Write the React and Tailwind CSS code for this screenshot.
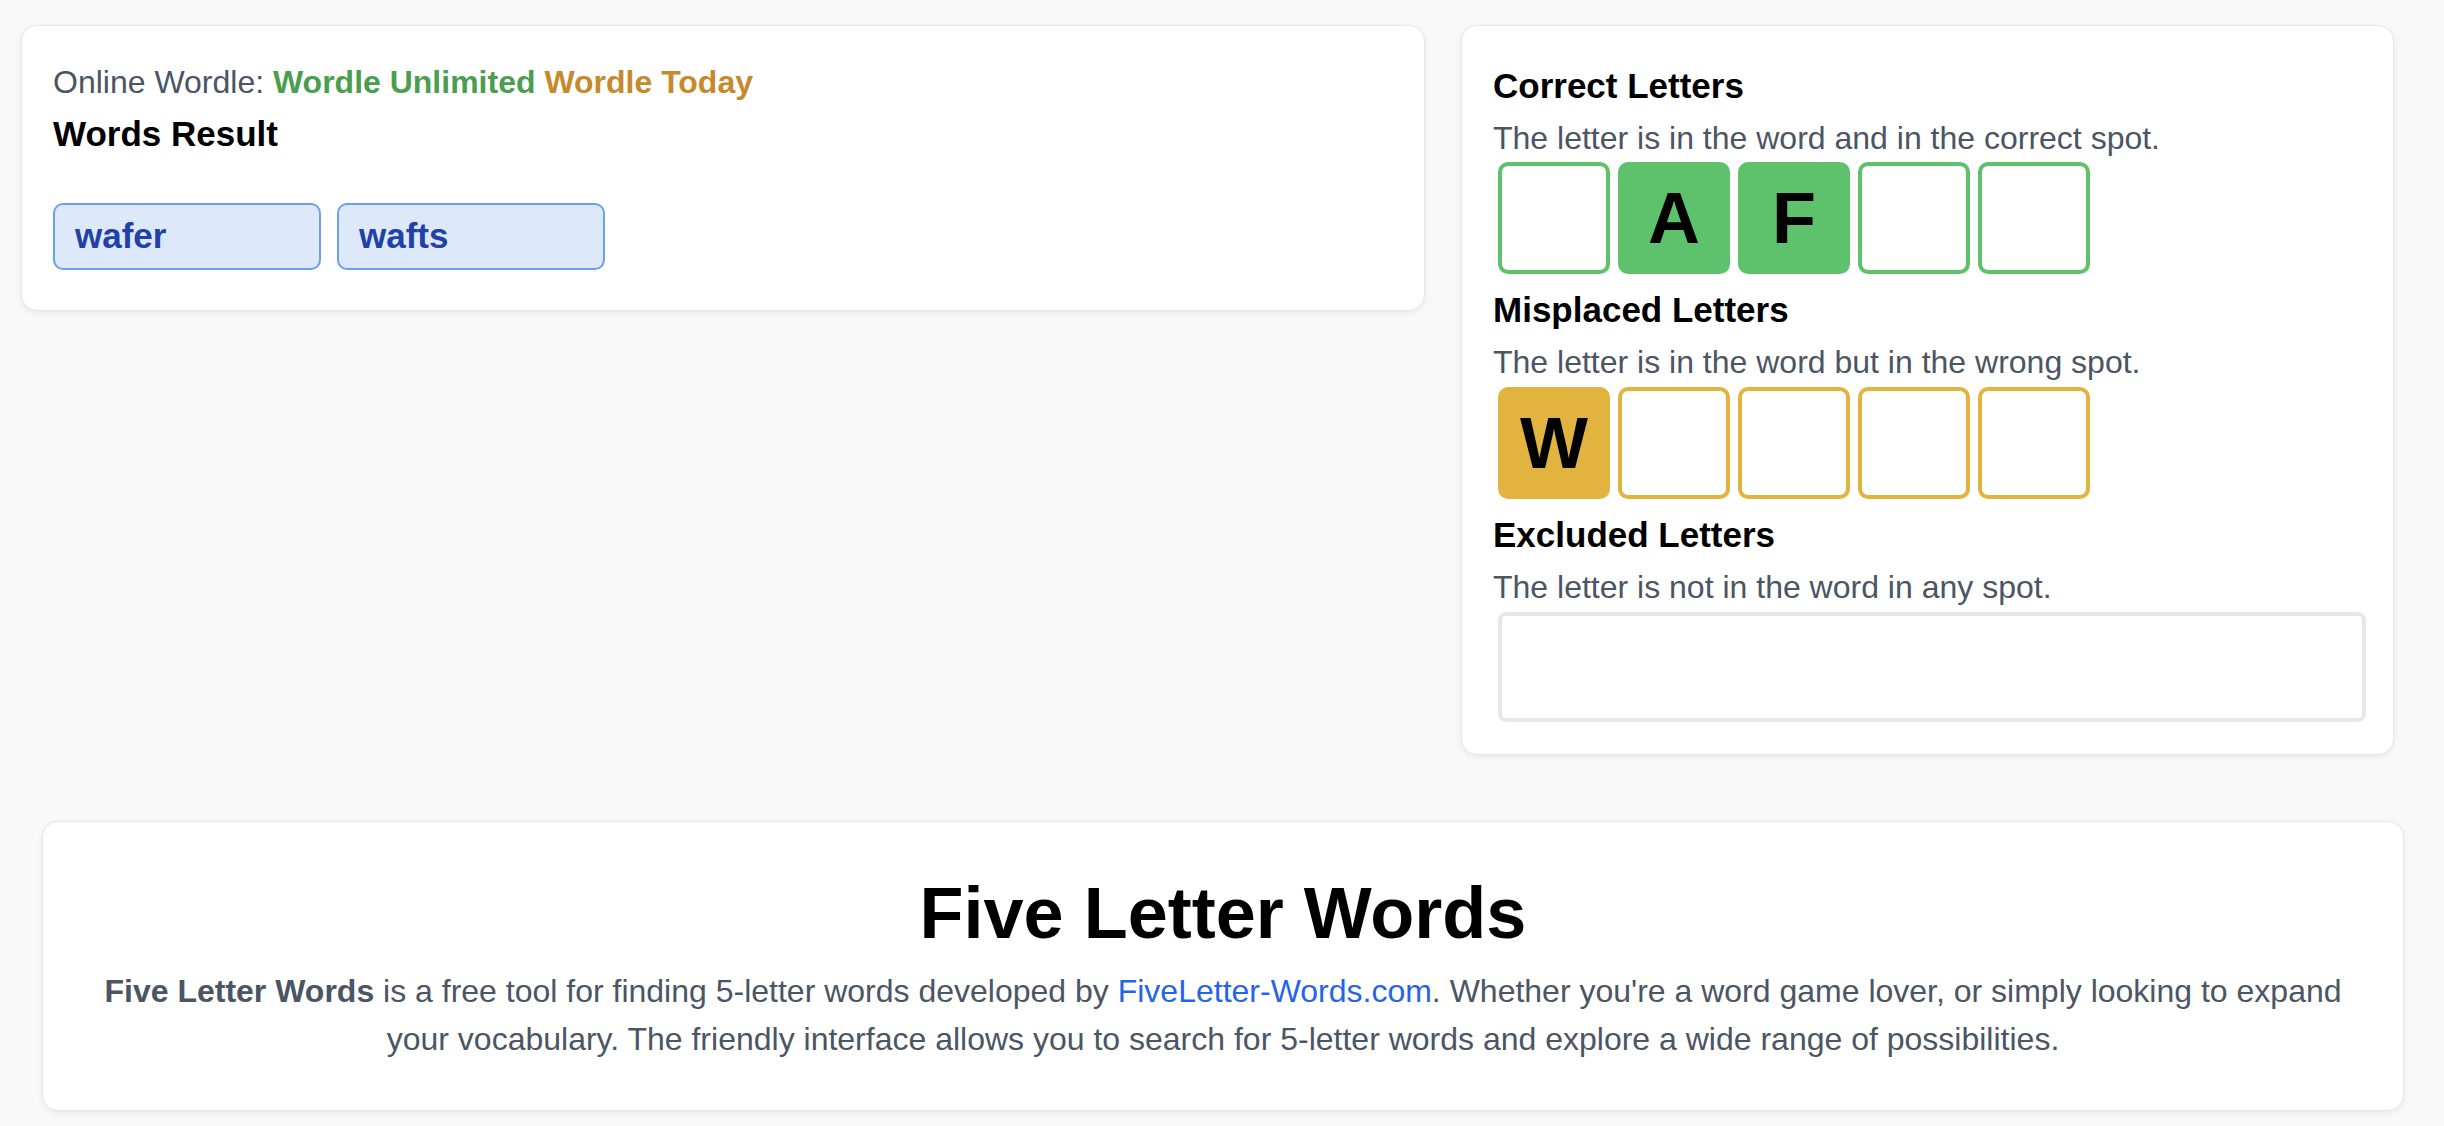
import React from 'react';

const correct = ['', 'A', 'F', '', ''];
const misplaced = ['W', '', '', '', ''];
const words = ['wafer', 'wafts'];

const Tile = ({ letter, tone }) => {
  const filled = letter !== '';
  const toneClass =
    tone === 'green'
      ? filled
        ? 'bg-[#5ec16b] border-[#5ec16b]'
        : 'bg-white border-[#5ec16b]'
      : filled
        ? 'bg-[#e2b33f] border-[#e2b33f]'
        : 'bg-white border-[#e2b33f]';
  return (
    <div
      className={`w-[112px] h-[112px] rounded-[10px] border-4 flex items-center justify-center text-[72px] font-bold text-black leading-none ${toneClass}`}
    >
      {letter}
    </div>
  );
};

const Section = ({ title, text }) => (
  <>
    <h3 className="text-[35px] leading-[56px] font-bold text-black">{title}</h3>
    <p className="text-[32px] leading-[48px] text-[#4b5563]">{text}</p>
  </>
);

const App = () => {
  return (
    <div
      className="min-h-screen bg-[#f9f9f9] pt-[25px] pb-[20px]"
      style={{ fontFamily: '"Liberation Sans", Arial, sans-serif' }}
    >
      {/* Top row */}
      <div className="flex items-start gap-[36px] pl-[21px] pr-[50px]">

        {/* Results card */}
        <div className="flex-1 bg-white border border-gray-200 rounded-[16px] shadow-[0_2px_6px_rgba(0,0,0,0.07)] pt-[32px] px-[31px] pb-[40px]">
          <p className="text-[32px] leading-[48px] text-[#4b5563]">
            Online Wordle:{' '}
            <span className="font-bold text-[#4b9e50]">Wordle Unlimited</span>{' '}
            <span className="font-bold text-[#c68a2c]">Wordle Today</span>
          </p>
          <h2 className="text-[35px] leading-[56px] font-bold text-black">Words Result</h2>
          <div className="flex gap-[16px] mt-[41px]">
            {words.map((w) => (
              <div
                key={w}
                className="w-[268px] h-[67px] flex items-center pl-[20px] bg-[#dde8fb] border-2 border-[#6b9ff0] rounded-[10px] text-[35px] font-bold text-[#2241a6]"
              >
                {w}
              </div>
            ))}
          </div>
        </div>

        {/* Filter card */}
        <div className="w-[933px] bg-white border border-gray-200 rounded-[16px] shadow-[0_2px_6px_rgba(0,0,0,0.07)] pt-[32px] pl-[31px] pr-[32px] pb-[32px]">
          <Section title="Correct Letters" text="The letter is in the word and in the correct spot." />
          <div className="flex gap-[8px] ml-[5px] mb-[8px]">
            {correct.map((l, i) => (
              <Tile key={i} letter={l} tone="green" />
            ))}
          </div>

          <Section title="Misplaced Letters" text="The letter is in the word but in the wrong spot." />
          <div className="flex gap-[8px] ml-[5px] mt-[1px] mb-[8px]">
            {misplaced.map((l, i) => (
              <Tile key={i} letter={l} tone="yellow" />
            ))}
          </div>

          <Section title="Excluded Letters" text="The letter is not in the word in any spot." />
          <div className="ml-[5px] mt-[1px] w-full h-[110px] bg-white border-4 border-[#e5e7eb] rounded-[8px]"></div>
        </div>
      </div>

      {/* About card */}
      <div className="mt-[66px] ml-[42px] mr-[40px] bg-white border border-gray-200 rounded-[16px] shadow-[0_2px_6px_rgba(0,0,0,0.07)] pt-[51px] pb-[47px] px-[30px] text-center">
        <h1 className="text-[72px] leading-[80px] font-bold text-black">Five Letter Words</h1>
        <p className="mt-[14px] text-[32px] leading-[48px] text-[#4b5563]">
          <strong className="font-bold">Five Letter Words</strong> is a free tool for finding 5-letter words developed by{' '}
          <a href="#" className="text-[#2563eb]">FiveLetter-Words.com</a>. Whether you're a word game lover, or simply looking to expand your vocabulary. The friendly interface allows you to search for 5-letter words and explore a wide range of possibilities.
        </p>
      </div>
    </div>
  );
};

export default App;
